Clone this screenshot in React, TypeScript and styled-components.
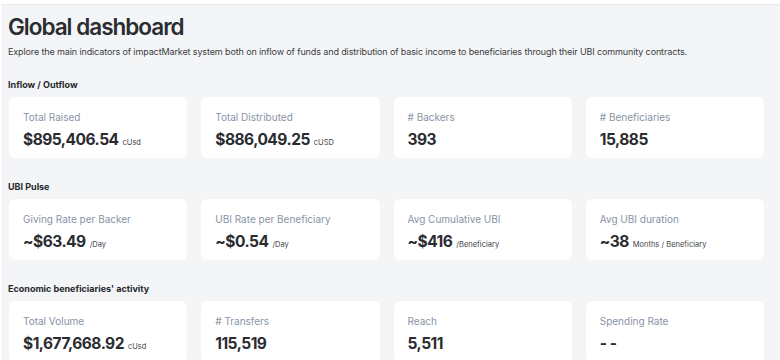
import React from "react";
import styled, { createGlobalStyle } from "styled-components";

const Global = createGlobalStyle`
  html, body { margin: 0; padding: 0; background: #ffffff; overflow: hidden; }
  body { font-family: Inter, "Noto Sans", sans-serif; color: #1f2329; }
`;

const Frame = styled.div`
  margin: 4px 0 0 2px;
  height: 356px;
  background: #f4f5f7;
  border-top: 1px solid #e9eaed;
  border-left: 1px solid #eceef1;
  padding: 8px 16px 0 5px;
  box-sizing: border-box;
  overflow: hidden;
`;

const Title = styled.h1`
  margin: 0;
  font-size: 22.5px;
  font-weight: 600;
  letter-spacing: -1px;
  line-height: 28px;
  color: #2a2c30;
`;

const Desc = styled.p`
  margin: 4px 0 0;
  font-size: 9px;
  letter-spacing: -0.12px;
  line-height: 14px;
  color: #3a3d42;
`;

const SectionTitle = styled.h2<{ $first?: boolean }>`
  margin: ${(p) => (p.$first ? "20px" : "0")} 0 0;
  font-size: 9px;
  font-weight: 700;
  line-height: 12px;
  color: #25282c;
`;

const Grid = styled.div`
  display: grid;
  grid-template-columns: repeat(4, 1fr);
  gap: 14px;
  margin: 6px 0 23px 1px;
`;

const Card = styled.div`
  background: #ffffff;
  border-radius: 6px;
  height: 61px;
  padding: 13px 14px 0;
  box-sizing: border-box;
`;

const Label = styled.div`
  font-size: 10px;
  line-height: 14px;
  color: #8793a6;
`;

const Value = styled.div`
  margin-top: 6px;
  display: flex;
  align-items: baseline;
  gap: 4px;
  white-space: nowrap;
`;

const Big = styled.span`
  font-size: 15.5px;
  font-weight: 700;
  color: #2a2c30;
  letter-spacing: -0.5px;
`;

const Unit = styled.span`
  font-size: 7.5px;
  color: #3f4247;
`;

type Stat = { label: string; value: string; unit?: string };

const sections: { title: string; stats: Stat[] }[] = [
  {
    title: "Inflow / Outflow",
    stats: [
      { label: "Total Raised", value: "$895,406.54", unit: "cUsd" },
      { label: "Total Distributed", value: "$886,049.25", unit: "cUSD" },
      { label: "# Backers", value: "393" },
      { label: "# Beneficiaries", value: "15,885" },
    ],
  },
  {
    title: "UBI Pulse",
    stats: [
      { label: "Giving Rate per Backer", value: "~$63.49", unit: "/Day" },
      { label: "UBI Rate per Beneficiary", value: "~$0.54", unit: "/Day" },
      { label: "Avg Cumulative UBI", value: "~$416", unit: "/Beneficiary" },
      { label: "Avg UBI duration", value: "~38", unit: "Months / Beneficiary" },
    ],
  },
  {
    title: "Economic beneficiaries' activity",
    stats: [
      { label: "Total Volume", value: "$1,677,668.92", unit: "cUsd" },
      { label: "# Transfers", value: "115,519" },
      { label: "Reach", value: "5,511" },
      { label: "Spending Rate", value: "- -" },
    ],
  },
];

export default function App() {
  return (
    <>
      <Global />
      <Frame>
        <Title>Global dashboard</Title>
        <Desc>
          Explore the main indicators of impactMarket system both on inflow of funds and distribution of basic income to beneficiaries through their UBI community contracts.
        </Desc>
        {sections.map((s, i) => (
          <React.Fragment key={s.title}>
            <SectionTitle $first={i === 0}>{s.title}</SectionTitle>
            <Grid>
              {s.stats.map((st) => (
                <Card key={st.label}>
                  <Label>{st.label}</Label>
                  <Value>
                    <Big>{st.value}</Big>
                    {st.unit && <Unit>{st.unit}</Unit>}
                  </Value>
                </Card>
              ))}
            </Grid>
          </React.Fragment>
        ))}
      </Frame>
    </>
  );
}
